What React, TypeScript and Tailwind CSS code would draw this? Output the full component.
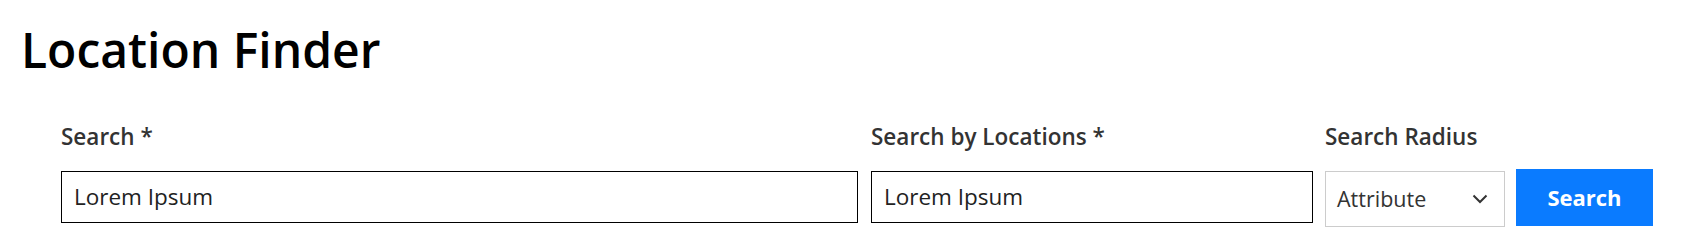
import React from "react";

export default function App() {
  return (
    <div className="w-[1693px] h-[250px] bg-white font-['Open_Sans',sans-serif] text-black">
      <h1 className="pl-[21px] pt-[22px] text-[48px] leading-[56px] font-semibold text-black">Location Finder</h1>
      <div className="flex pl-[61px] pt-[44px] items-start">
        <div className="flex flex-col w-[797px]">
          <label className="text-[22.5px] leading-[30px] font-semibold text-[#333333]">Search *</label>
          <div className="mt-[19px] h-[52px] border border-black flex items-center px-[12px] text-[22.5px] text-[#222222]">Lorem Ipsum</div>
        </div>
        <div className="flex flex-col w-[442px] ml-[13px]">
          <label className="text-[22.5px] leading-[30px] font-semibold text-[#333333]">Search by Locations *</label>
          <div className="mt-[19px] h-[52px] border border-black flex items-center px-[12px] text-[22.5px] text-[#222222]">Lorem Ipsum</div>
        </div>
        <div className="flex flex-col w-[180px] ml-[12px]">
          <label className="text-[22.5px] leading-[30px] font-semibold text-[#333333]">Search Radius</label>
          <div className="mt-[19px] h-[56px] border border-[#cccccc] flex items-center justify-between pl-[11px] pr-[16px] text-[21.5px] text-[#333333]">
            <span>Attribute</span>
            <svg width="16" height="10" viewBox="0 0 16 10" fill="none" stroke="#333333" strokeWidth="2">
              <path d="M1.5 1.5 L8 8 L14.5 1.5" />
            </svg>
          </div>
        </div>
        <div className="ml-[11px] mt-[47px]">
          <button className="w-[137px] h-[57px] bg-[#0a7bff] text-white text-[22px] font-bold">Search</button>
        </div>
      </div>
    </div>
  );
}
